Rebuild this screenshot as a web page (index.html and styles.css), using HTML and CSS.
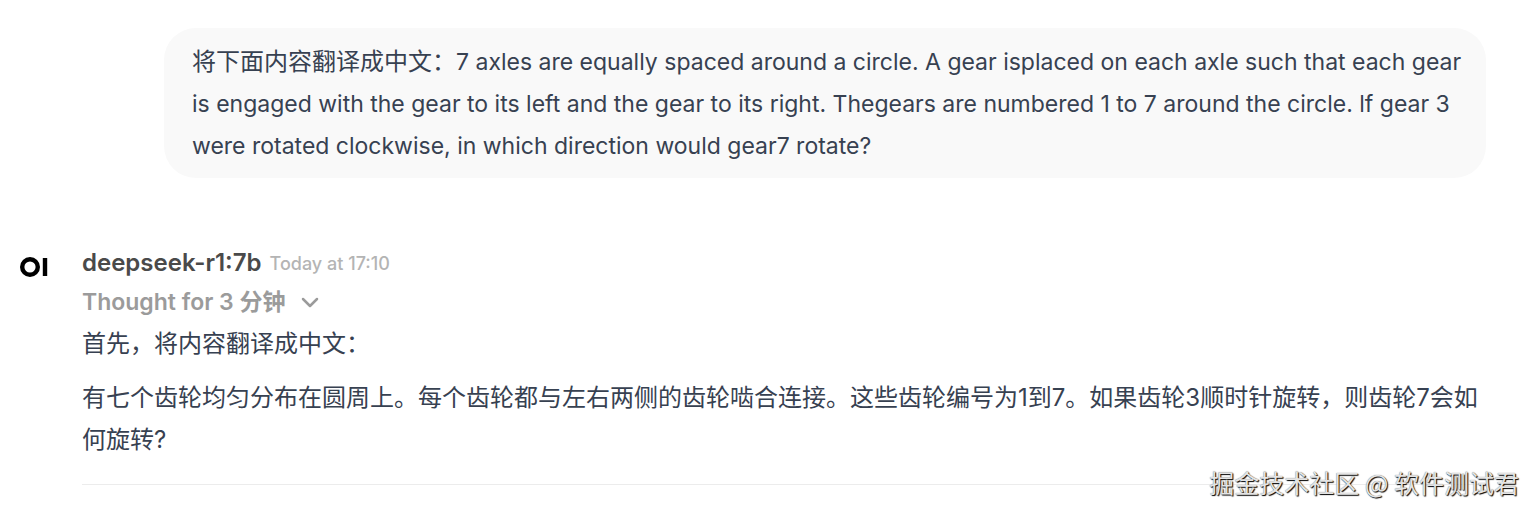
FILE: index.html
```html
<!DOCTYPE html>
<html lang="zh-CN">
<head>
    <meta charset="UTF-8">
    <meta name="viewport" content="width=device-width, initial-scale=1.0">
    <title>deepseek-r1:7b</title>
    <link rel="stylesheet" href="styles.css">
</head>
<body>
    <main class="chat">
        <div class="user-message">
            <p class="bubble"><span class="chinese">将下面内容翻译成中文：</span>7 axles are equally spaced around a circle. A gear isplaced on each axle such that each gear is engaged with the gear to its left and the gear to its right. Thegears are numbered 1 to 7 around the circle. lf gear 3 were rotated clockwise, in which direction would gear7 rotate?</p>
        </div>

        <article class="reply">
            <div class="avatar">
                <svg class="logo" viewBox="0 0 28 20" role="img" aria-label="OI">
                    <circle cx="10" cy="10" r="7.8"/>
                    <path d="M25 1v18"/>
                </svg>
            </div>
            <div class="reply-body">
                <header class="reply-header">
                    <h2 class="model-name">deepseek-r1:7b</h2>
                    <time class="time">Today at 17:10</time>
                </header>
                <button class="thought" type="button">
                    <span>Thought for 3 分钟</span>
                    <svg class="chevron" viewBox="0 0 20 20" aria-hidden="true">
                        <path d="M3 7l7 7 7-7"/>
                    </svg>
                </button>
                <div class="content">
                    <p>首先，将内容翻译成中文：</p>
                    <p>有七个齿轮均匀分布在圆周上。每个齿轮都与左右两侧的齿轮啮合连接。这些齿轮编号为1到7。如果齿轮3顺时针旋转，则齿轮7会如何旋转?</p>
                </div>
                <hr class="divider">
            </div>
        </article>
    </main>
    <div class="watermark">掘金技术社区 @ 软件测试君</div>
</body>
</html>
```

FILE: styles.css
```css
* {
    margin: 0;
    padding: 0;
    box-sizing: border-box;
}

body {
    background-color: #fff;
    color: #374151;
    font-family: Inter, "Noto Sans CJK SC", sans-serif;
    font-size: 24px;
    line-height: 42px;
}

.chat {
    padding: 28px 50px 0 20px;
}

.user-message {
    display: flex;
    justify-content: flex-end;
    margin-bottom: 66px;
}

.bubble {
    width: 100%;
    max-width: 1322px;
    padding: 13px 20px 11px 28px;
    background-color: #f9f9f9;
    border-radius: 32px;
    font-size: 23px;
}

.chinese {
    font-size: 24px;
}

.reply {
    display: flex;
}

.avatar {
    flex: none;
    width: 62px;
    padding-top: 13px;
}

.logo {
    display: block;
    width: 28px;
    height: 20px;
    fill: none;
    stroke: #000;
    stroke-width: 4.4;
}

.reply-body {
    flex: 1;
}

.reply-header {
    display: flex;
    align-items: center;
    gap: 8px;
    height: 38px;
}

.model-name {
    color: #4a4a4a;
    font-size: 24px;
    font-weight: 600;
}

.time {
    padding-top: 2px;
    color: #b4b4b4;
    font-size: 18px;
    font-weight: 500;
}

.thought {
    display: flex;
    align-items: center;
    gap: 14px;
    height: 39px;
    margin-bottom: 2px;
    border: none;
    background: none;
    color: #9b9b9b;
    font: inherit;
    font-size: 23px;
    font-weight: 600;
    cursor: pointer;
}

.chevron {
    width: 20px;
    height: 20px;
    fill: none;
    stroke: currentColor;
    stroke-width: 2.5;
    stroke-linecap: round;
    stroke-linejoin: round;
}

.content p + p {
    margin-top: 12px;
}

.divider {
    margin-top: 23px;
    border: none;
    border-top: 1px solid #ececec;
}

.watermark {
    position: absolute;
    right: 17px;
    bottom: 11px;
    color: #e4e4e4;
    font-family: "Noto Sans CJK SC", sans-serif;
    font-size: 25px;
    text-shadow: 1px 1px 1px #000, 0 0 1px #666;
}
```
